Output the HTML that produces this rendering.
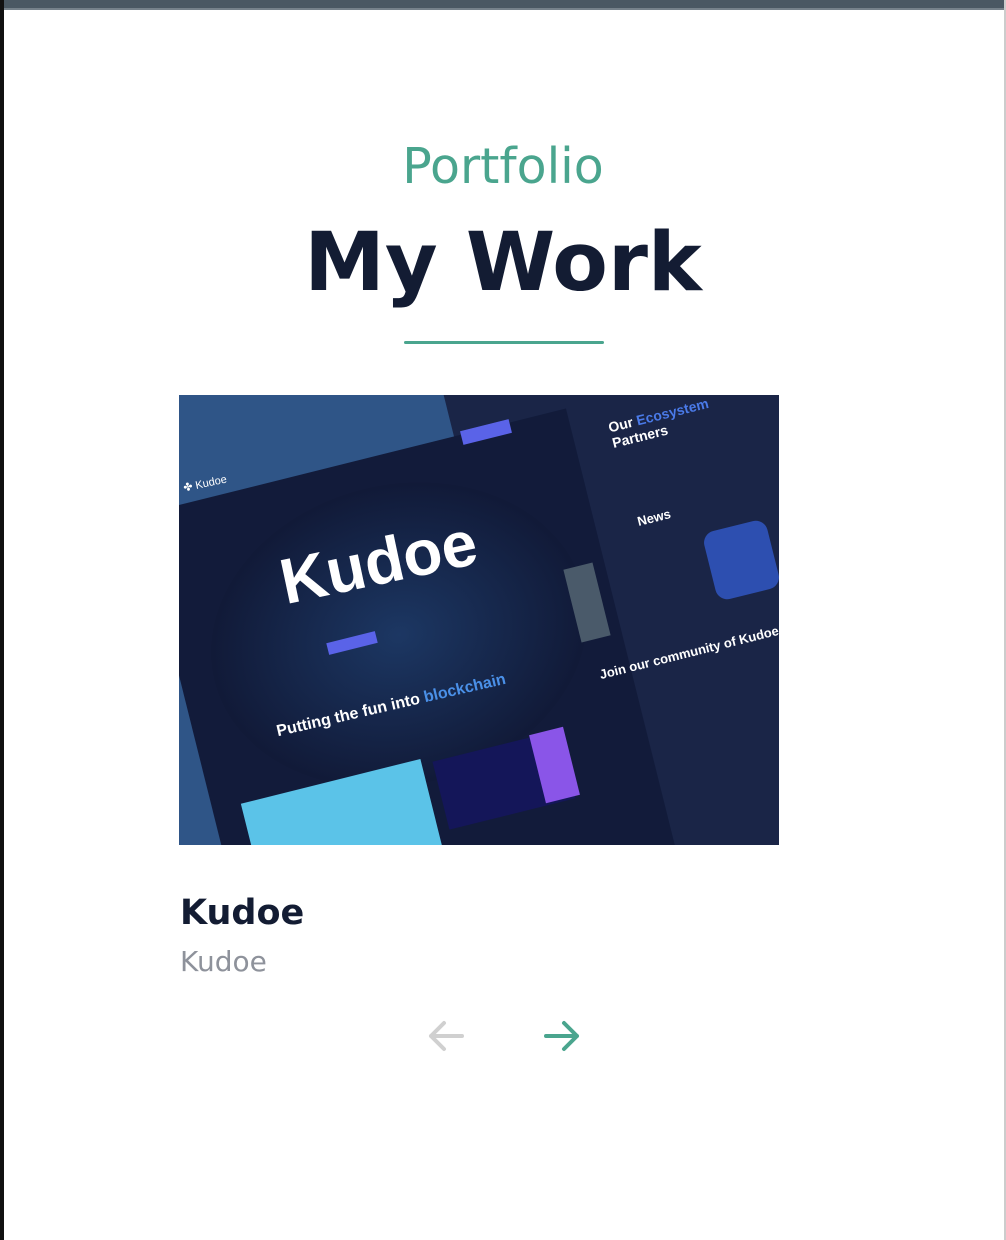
<!DOCTYPE html>
<html><head><meta charset="utf-8"><style>
html,body{margin:0;padding:0;width:1006px;height:1240px;overflow:hidden;background:#fff;font-family:"DejaVu Sans","Liberation Sans",sans-serif;}
.top{position:absolute;left:0;top:0;width:1006px;height:8px;background:#4a5863;border-bottom:2px solid #76828b;}
.lb{position:absolute;left:0;top:0;width:4px;height:1240px;background:#111;}
.rb{position:absolute;right:0;top:0;width:2px;height:1240px;background:#ccc;}
.t{position:absolute;left:0;width:1006px;text-align:center;white-space:nowrap;}
.img{position:absolute;left:179px;top:395px;width:600px;height:450px;overflow:hidden;background:#2f5587;}
.p{position:absolute;background:#101a38;}
.w{color:#fff;position:absolute;font-family:"Liberation Sans",sans-serif;font-weight:bold;white-space:nowrap;}
</style></head><body>
<div class="top"></div><div class="lb"></div><div class="rb"></div>
<div class="t" style="top:138px;font-size:49px;color:#4aa58e;">Portfolio</div>
<div class="t" style="top:216px;font-size:81px;font-weight:bold;color:#131c33;">My Work</div>
<div style="position:absolute;left:404px;top:341px;width:200px;height:3px;background:#4aa58e;border-radius:2px"></div>
<div class="img">
 <div class="p" style="left:330px;top:-80px;width:360px;height:640px;transform:rotate(-14deg);background:#1a2547;"></div>
 <div class="p" style="left:-40px;top:120px;width:440px;height:480px;transform:rotate(-14deg);transform-origin:0 0;background:#121b3a;"></div>
 <div style="position:absolute;left:30px;top:90px;width:380px;height:300px;border-radius:50%;background:radial-gradient(#1c3763,#111a38 70%);transform:rotate(-14deg)"></div>
 <div class="w" style="left:100px;top:130px;font-size:64px;transform:rotate(-12deg)">Kudoe</div>
 <div class="w" style="left:4px;top:82px;font-size:11px;font-weight:normal;transform:rotate(-12deg)">✤ Kudoe</div>
 <div style="position:absolute;left:282px;top:30px;width:50px;height:14px;background:#5a63e8;transform:rotate(-14deg)"></div>
 <div style="position:absolute;left:148px;top:242px;width:50px;height:12px;background:#5a63e8;transform:rotate(-14deg)"></div>
 <div class="w" style="left:95px;top:302px;font-size:16px;transform:rotate(-13deg)">Putting the fun into <span style="color:#4a90e8">blockchain</span></div>
 <div style="position:absolute;left:70px;top:385px;width:185px;height:90px;background:#5bc3e8;transform:rotate(-14deg)"></div>
 <div style="position:absolute;left:260px;top:350px;width:130px;height:70px;background:#141659;transform:rotate(-14deg)"></div>
 <div style="position:absolute;left:358px;top:335px;width:35px;height:70px;background:#8a55e8;transform:rotate(-14deg)"></div>
 <div class="w" style="left:430px;top:12px;font-size:14px;transform:rotate(-14deg)">Our <span style="color:#4a7ae8">Ecosystem</span><br>Partners</div>
 <div class="w" style="left:458px;top:115px;font-size:13px;transform:rotate(-14deg)">News</div>
 <div style="position:absolute;left:530px;top:130px;width:65px;height:70px;background:#2d4fb0;border-radius:12px;transform:rotate(-14deg)"></div>
 <div class="w" style="left:418px;top:250px;font-size:13px;transform:rotate(-14deg)">Join our community of Kudoe</div>
 <div style="position:absolute;left:393px;top:170px;width:30px;height:75px;background:#4a5a6a;transform:rotate(-14deg)"></div>
</div>
<div style="position:absolute;left:180px;top:893px;font-size:35px;font-weight:bold;color:#131c33;">Kudoe</div>
<div style="position:absolute;left:180px;top:945px;font-size:28px;color:#8e929b;">Kudoe</div>
<svg style="position:absolute;left:426px;top:1018px" width="40" height="36" viewBox="0 0 40 36"><path d="M36 18H5M18 5L5 18l13 13" fill="none" stroke="#d0d0d0" stroke-width="4" stroke-linecap="round" stroke-linejoin="round"/></svg>
<svg style="position:absolute;left:542px;top:1018px" width="40" height="36" viewBox="0 0 40 36"><path d="M4 18h31M22 5l13 13-13 13" fill="none" stroke="#4aa58e" stroke-width="4" stroke-linecap="round" stroke-linejoin="round"/></svg>
</body></html>
